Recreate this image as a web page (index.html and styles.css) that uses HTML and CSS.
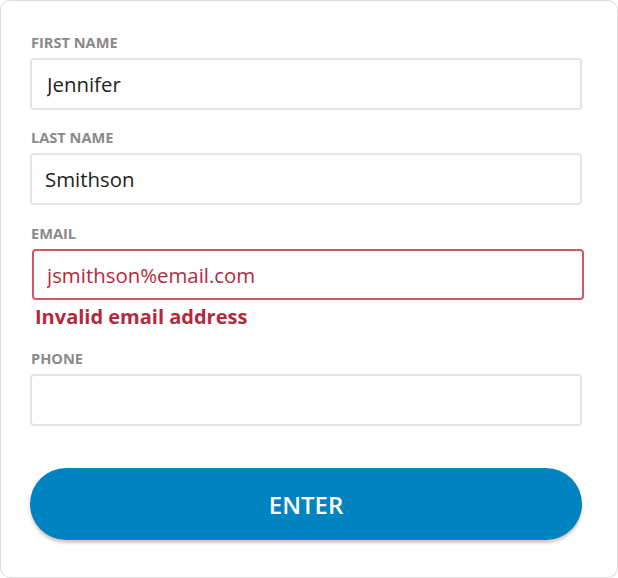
FILE: index.html
```html
<!DOCTYPE html>
<html lang="en">
<head>
    <meta charset="UTF-8">
    <meta name="viewport" content="width=device-width, initial-scale=1.0">
    <title>Contact form</title>
    <link rel="stylesheet" href="styles.css">
</head>
<body>
    <form class="card">
        <div class="field">
            <label for="first">First name</label>
            <input id="first" type="text" class="input first" value="Jennifer">
        </div>
        <div class="field">
            <label for="last">Last name</label>
            <input id="last" type="text" class="input" value="Smithson">
        </div>
        <div class="field">
            <label for="email">Email</label>
            <input id="email" type="text" class="input invalid" value="jsmithson%email.com">
            <span class="error">Invalid email address</span>
        </div>
        <div class="field">
            <label for="phone">Phone</label>
            <input id="phone" type="text" class="input">
        </div>
        <button type="button" class="btn">ENTER</button>
    </form>
</body>
</html>
```

FILE: styles.css
```css
body {
    margin: 0;
    font-family: "Open Sans", "Liberation Sans", sans-serif;
    background: #fff;
}

.card {
    box-sizing: border-box;
    width: 618px;
    height: 578px;
    border: 1px solid #dcdcdc;
    border-radius: 10px;
    padding: 32px 35px 0 29px;
    display: flex;
    flex-direction: column;
}

.field {
    display: flex;
    flex-direction: column;
    gap: 7px;
    margin-bottom: 18px;
}

.field:nth-child(2) {
    margin-bottom: 19px;
}

.field label {
    font-size: 14.6px;
    line-height: 18px;
    font-weight: 700;
    color: #8a8a8a;
    text-transform: uppercase;
    padding-left: 1px;
}

.input {
    box-sizing: border-box;
    width: 552px;
    height: 52px;
    border: 2px solid #e4e4e4;
    border-radius: 4px;
    padding: 0 13px;
    font-family: inherit;
    font-size: 20.4px;
    font-weight: 500;
    color: #222;
    outline: none;
}

.input.first {
    padding-left: 15px;
}

.input.invalid {
    margin-left: 2px;
    height: 51px;
    border-color: #cd5a5e;
    color: #b5293c;
}

.error {
    margin: -2px 0 2px 5px;
    font-size: 20px;
    line-height: 24px;
    font-weight: 700;
    color: #b5293c;
}

.btn {
    margin-top: 24px;
    width: 552px;
    height: 72px;
    border: none;
    border-radius: 36px;
    background-color: #0083c1;
    color: #fff;
    font-family: inherit;
    font-size: 24px;
    font-weight: 600;
    box-shadow: 0 3px 3px rgba(120, 70, 40, 0.3);
}
```
